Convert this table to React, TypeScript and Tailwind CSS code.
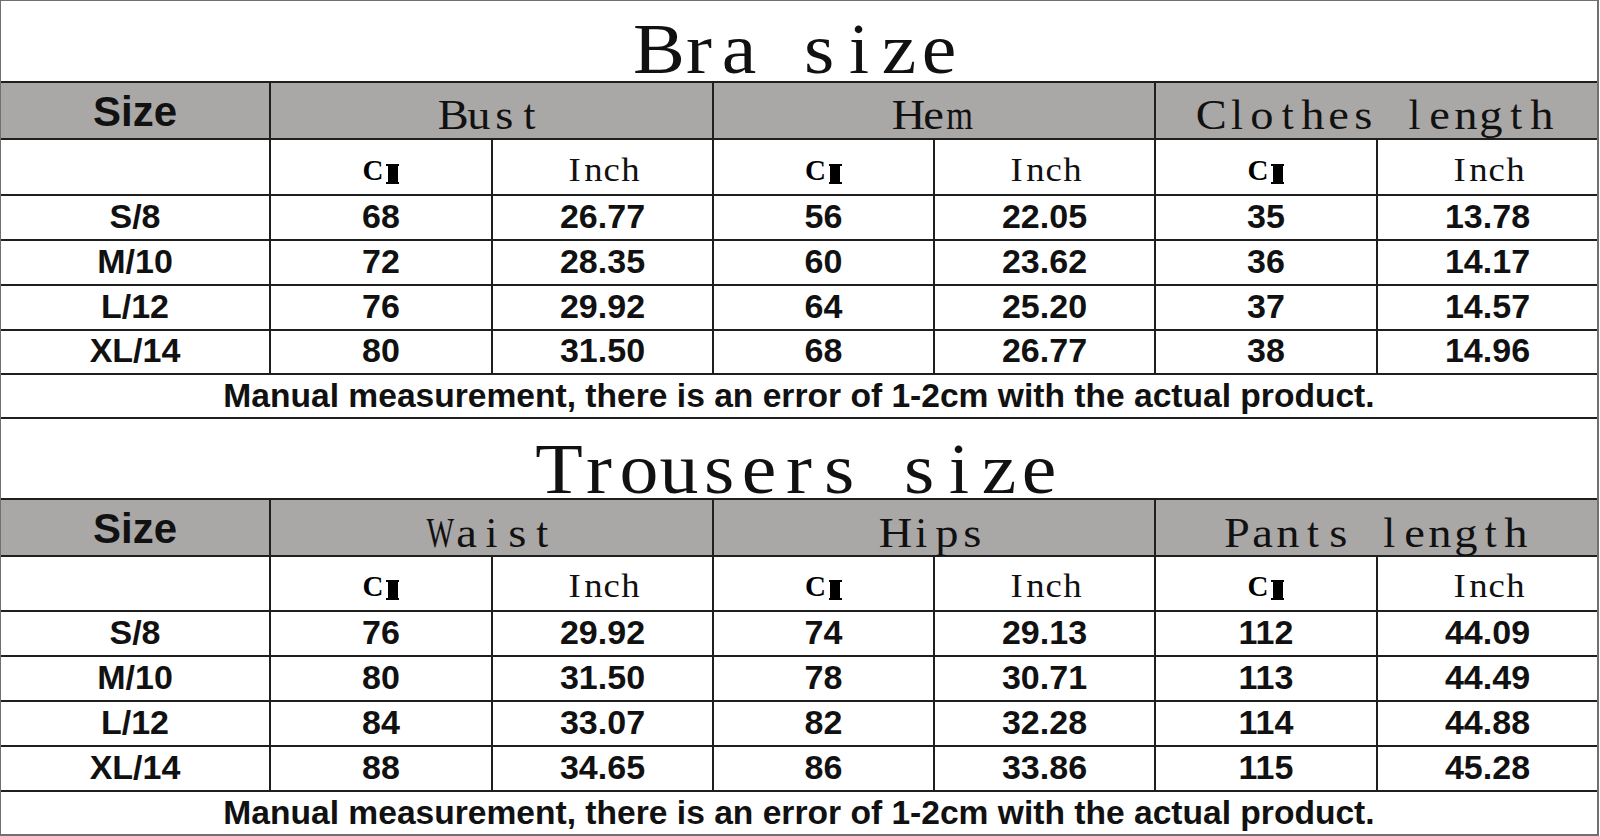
import React from "react";

type Section = {
  title: string;
  titlePad: string;
  headPad: string;
  cols: string[];
  rows: string[][];
};

const sections: Section[] = [
  {
    title: "Bra size",
    titlePad: "pt-[12px]",
    headPad: "pt-[10px]",
    cols: ["Bust", "Hem", "Clothes length"],
    rows: [
      ["S/8", "68", "26.77", "56", "22.05", "35", "13.78"],
      ["M/10", "72", "28.35", "60", "23.62", "36", "14.17"],
      ["L/12", "76", "29.92", "64", "25.20", "37", "14.57"],
      ["XL/14", "80", "31.50", "68", "26.77", "38", "14.96"],
    ],
  },
  {
    title: "Trousers size",
    titlePad: "pt-[14px]",
    headPad: "pt-[11px]",
    cols: ["Waist", "Hips", "Pants length"],
    rows: [
      ["S/8", "76", "29.92", "74", "29.13", "112", "44.09"],
      ["M/10", "80", "31.50", "78", "30.71", "113", "44.49"],
      ["L/12", "84", "33.07", "82", "32.28", "114", "44.88"],
      ["XL/14", "88", "34.65", "86", "33.86", "115", "45.28"],
    ],
  },
];

function Mono({ text, cell }: { text: string; cell: string }) {
  return (
    <span className="inline-flex whitespace-pre">
      {text.split("").map((c, i) => (
        <span key={i} className={`inline-flex justify-center ${cell}`}>
          <span
            className={
              "WM".includes(c)
                ? "inline-block scale-x-[0.68]"
                : c === "m"
                ? "inline-block scale-x-[0.8]"
                : "ilft".includes(c)
                ? "inline-block"
                : "inline-block scale-x-[1.08]"
            }
          >
            {c === " " ? "\u00a0" : c}
          </span>
        </span>
      ))}
    </span>
  );
}

const serif = "font-['Liberation_Serif','Times_New_Roman',serif]";
const sans = "font-['Liberation_Sans',Arial,sans-serif]";

function CM() {
  return (
    <span className="inline-flex items-end" aria-label="CM">
      <span className={`${serif} font-bold text-[29px] leading-none`}>C</span>
      <span className="ml-[3px] mb-[1px] inline-flex flex-col items-center">
        <span className="block w-[13px] h-[2px] bg-black" />
        <span className="block w-[10px] h-[16px] bg-black" />
        <span className="block w-[13px] h-[2px] bg-black" />
      </span>
    </span>
  );
}

function SectionCells({ s }: { s: Section }) {
  return (
    <>
      <div className={`col-span-7 bg-white flex justify-center items-start ${s.titlePad}`}>
        <span className={`${serif} text-[72px] leading-none text-[#111]`}>
          <Mono text={s.title} cell="w-[40px]" />
        </span>
      </div>
      <div className="bg-[#aaa7a7] flex justify-center items-start pt-[8px]">
        <span className={`${sans} font-bold text-[42px] leading-none text-[#111]`}>Size</span>
      </div>
      {s.cols.map((c) => (
        <div key={c} className={`col-span-2 bg-[#aaa7a7] flex justify-center items-start ${s.headPad}`}>
          <span className={`${serif} text-[43px] leading-none text-[#111]`}>
            <Mono text={c} cell="w-[25.4px]" />
          </span>
        </div>
      ))}
      <div className="bg-white" />
      {s.cols.map((c) => (
        <React.Fragment key={c + "-u"}>
          <div className="bg-white flex justify-center items-center pt-[6px]">
            <CM />
          </div>
          <div className="bg-white flex justify-center items-center pt-[5px]">
            <span className={`${serif} text-[34px] leading-none text-[#111]`}>
              <Mono text="Inch" cell="w-[18.5px]" />
            </span>
          </div>
        </React.Fragment>
      ))}
      {s.rows.map((r) =>
        r.map((v, i) => (
          <div key={r[0] + i} className="bg-white flex justify-center items-center pb-[4px]">
            <span className={`${sans} font-bold text-[34px] leading-none text-[#111]`}>{v}</span>
          </div>
        ))
      )}
      <div className="col-span-7 bg-white flex justify-center items-center">
        <span className={`${sans} font-bold text-[33.6px] leading-none text-[#111]`}>
          Manual measurement, there is an error of 1-2cm with the actual product.
        </span>
      </div>
    </>
  );
}

export default function App() {
  return (
    <div className="w-[1600px] h-[836px] bg-white overflow-hidden">
      <div className="w-[1599px] grid grid-cols-[268px_220px_219px_219px_219px_220px_219px] grid-rows-[80px_55px_54px_43px_43px_43px_42px_42px_79px_55px_53px_43px_43px_43px_43px_42px] gap-[2px] bg-[#1f1f1f] border-t border-l border-r-2 border-b-2 border-[#707070]">
        {sections.map((s) => (
          <SectionCells key={s.title} s={s} />
        ))}
      </div>
    </div>
  );
}
